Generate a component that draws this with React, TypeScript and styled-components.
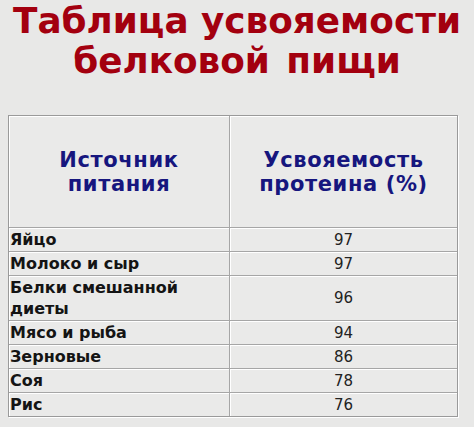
import styled, { createGlobalStyle } from 'styled-components';

const GlobalStyle = createGlobalStyle`
  html, body {
    margin: 0;
    padding: 0;
    background: #e8e8e7;
  }
  body {
    font-family: 'DejaVu Sans', Verdana, sans-serif;
  }
`;

const Page = styled.div`
  width: 474px;
  height: 427px;
  overflow: hidden;
`;

const Title = styled.h1`
  margin: 0;
  padding-top: 1px;
  text-align: center;
  color: #a3000f;
  font-family: 'DejaVu Sans', Verdana, sans-serif;
  font-weight: bold;
  font-size: 35.8px;
  line-height: 40px;
  height: 114px;
`;

const SecondLine = styled.span`
  word-spacing: 4px;
`;

const Table = styled.table`
  margin-left: 8px;
  width: 450px;
  border-collapse: separate;
  border-spacing: 0;
  border: 1px solid #9a9a9a;
  box-shadow: 1px 1px 0 #fff, inset 1px 1px 0 #fff;
  background: #eaeae9;
`;

const HeadCell = styled.th`
  height: 111px;
  padding: 0;
  text-align: center;
  vertical-align: middle;
  color: #16167e;
  font-family: 'DejaVu Sans', Verdana, sans-serif;
  font-weight: bold;
  font-size: 21px;
  letter-spacing: 0.6px;
  line-height: 24px;
  border-right: 1px solid #a6a6a6;
  border-bottom: 1px solid #a6a6a6;
  box-shadow: inset 1px 1px 0 #fff;
  &:last-child {
    border-right: none;
  }
`;

const NameCell = styled.td<{ $tall?: boolean }>`
  width: 219px;
  height: ${(p) => (p.$tall ? '44px' : '23px')};
  padding: 0 0 0 1px;
  text-align: left;
  vertical-align: middle;
  color: #141414;
  font-family: 'DejaVu Sans', Tahoma, sans-serif;
  font-weight: bold;
  font-size: 16px;
  line-height: 21px;
  border-right: 1px solid #a6a6a6;
  border-bottom: 1px solid #a6a6a6;
  box-shadow: inset 1px 1px 0 #fff;
`;

const ValueCell = styled.td`
  padding: 0;
  text-align: center;
  vertical-align: middle;
  color: #222;
  font-family: 'DejaVu Sans', Tahoma, sans-serif;
  font-size: 15px;
  border-bottom: 1px solid #a6a6a6;
  box-shadow: inset 1px 1px 0 #fff;
`;

const Row = styled.tr`
  &:last-child td {
    border-bottom: none;
  }
`;

const rows = [
  { name: 'Яйцо', value: 97 },
  { name: 'Молоко и сыр', value: 97 },
  { name: 'Белки смешанной диеты', value: 96, tall: true },
  { name: 'Мясо и рыба', value: 94 },
  { name: 'Зерновые', value: 86 },
  { name: 'Соя', value: 78 },
  { name: 'Рис', value: 76 },
];

export default function App() {
  return (
    <Page>
      <GlobalStyle />
      <Title>
        Таблица усвояемости
        <br />
        <SecondLine>белковой пищи</SecondLine>
      </Title>
      <Table>
        <thead>
          <tr>
            <HeadCell>
              Источник
              <br />
              питания
            </HeadCell>
            <HeadCell>
              Усвояемость
              <br />
              протеина (%)
            </HeadCell>
          </tr>
        </thead>
        <tbody>
          {rows.map((r) => (
            <Row key={r.name}>
              <NameCell $tall={r.tall}>{r.name}</NameCell>
              <ValueCell>{r.value}</ValueCell>
            </Row>
          ))}
        </tbody>
      </Table>
    </Page>
  );
}
